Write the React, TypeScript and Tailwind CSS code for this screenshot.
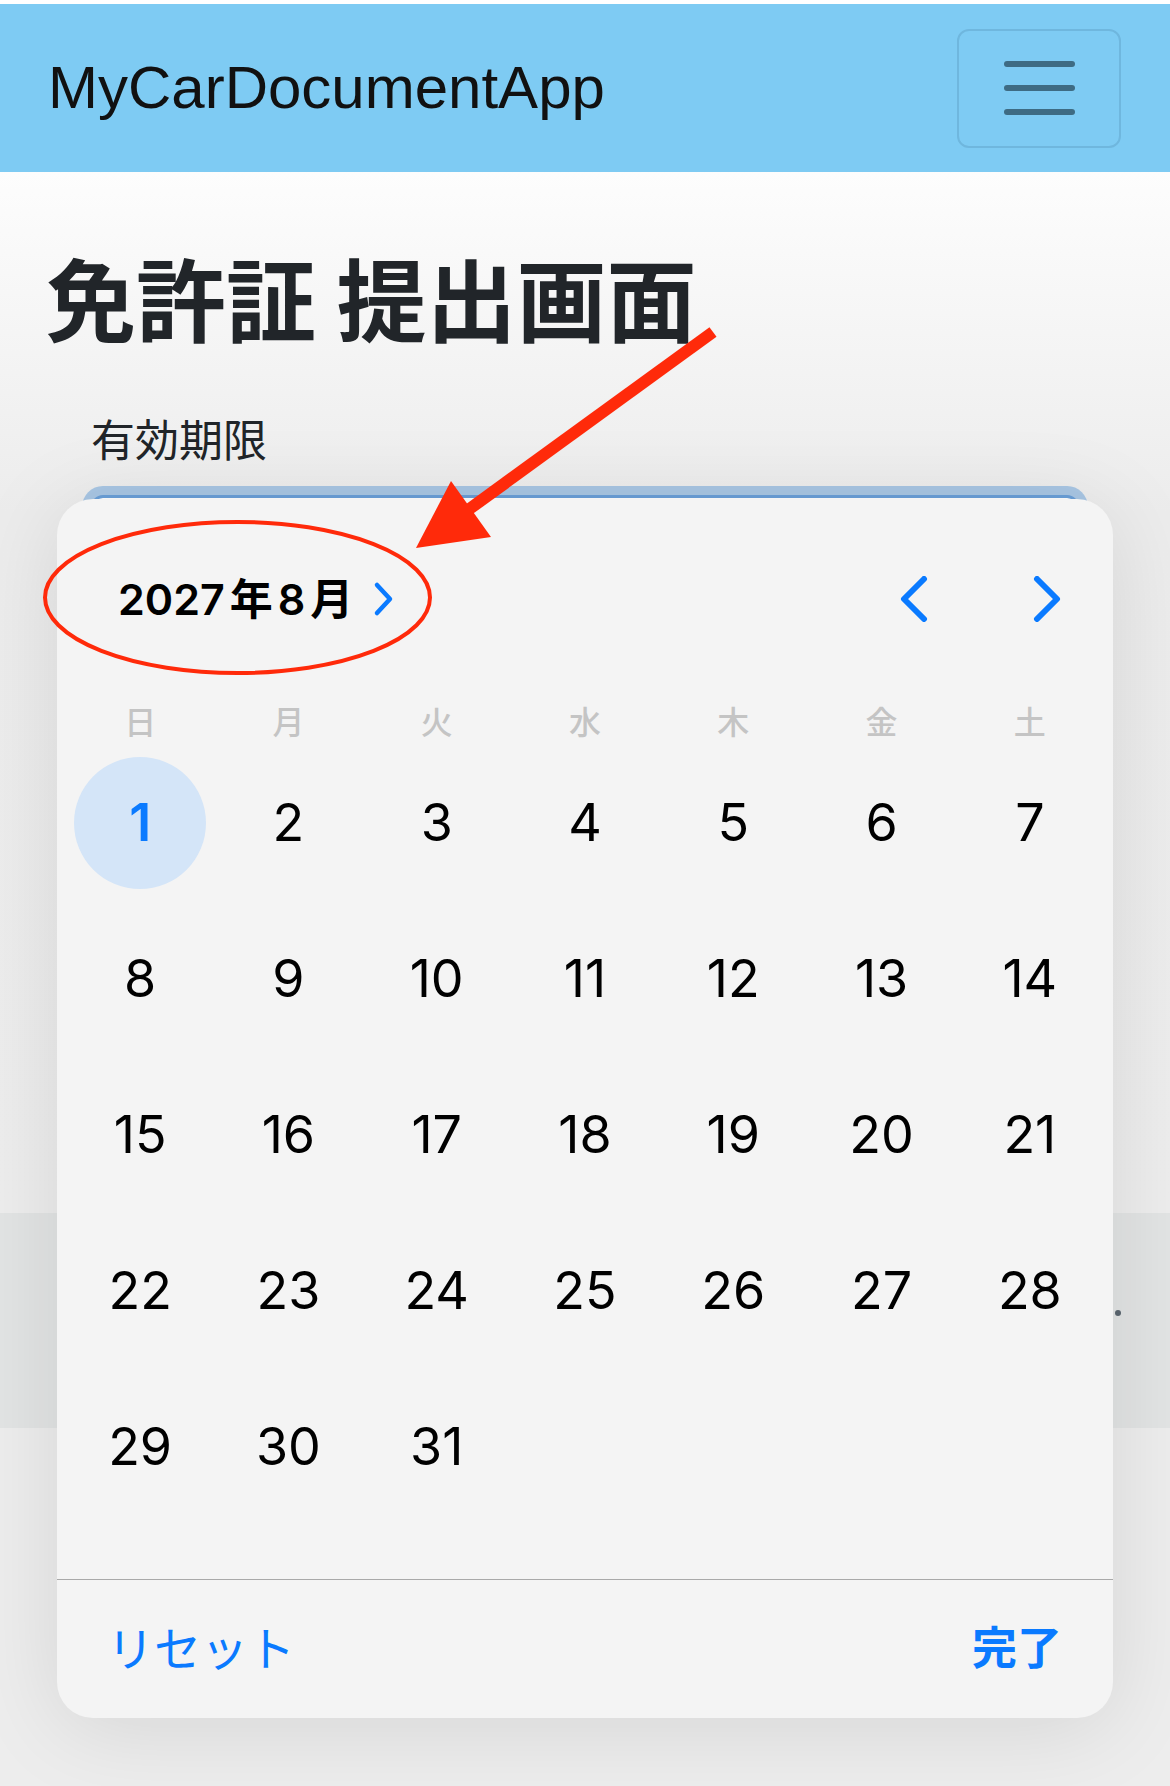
import React from "react";

const weekdays = ["日", "月", "火", "水", "木", "金", "土"];

const weeks: (number | null)[][] = [
  [1, 2, 3, 4, 5, 6, 7],
  [8, 9, 10, 11, 12, 13, 14],
  [15, 16, 17, 18, 19, 20, 21],
  [22, 23, 24, 25, 26, 27, 28],
  [29, 30, 31, null, null, null, null],
];

const Chevron = ({ dir, className }: { dir: "left" | "right"; className?: string }) => (
  <svg width="28" height="46" viewBox="0 0 28 46" className={className}>
    <polyline
      points={dir === "left" ? "24,3 4,23 24,43" : "4,3 24,23 4,43"}
      fill="none"
      stroke="#0a7aff"
      strokeWidth="6"
      strokeLinecap="round"
      strokeLinejoin="round"
    />
  </svg>
);

const DatePopover = () => {
  return (
    <div className="absolute left-[-34px] top-[4px] z-10 flex h-[1219px] w-[1056px] flex-col rounded-[36px] bg-[#f4f4f4] shadow-[0_10px_90px_rgba(0,0,0,0.10)]">
      {/* month header */}
      <div className="mt-[70px] flex h-[60px] items-center justify-between pl-[61px] pr-[52px]">
        <div className="flex items-center">
          <span className="font-['Inter','Noto_Sans_CJK_JP',sans-serif] text-[43px] font-semibold leading-none text-black">
            <span>2027</span>
            <span className="mx-[5px]">年</span>
            <span>8</span>
            <span className="ml-[5px]">月</span>
          </span>
          <svg width="22" height="36" viewBox="0 0 22 36" className="ml-[20px]">
            <polyline
              points="4,4 17,18 4,32"
              fill="none"
              stroke="#0a7aff"
              strokeWidth="4.5"
              strokeLinecap="round"
              strokeLinejoin="round"
            />
          </svg>
        </div>
        <div className="flex items-center gap-[105px]">
          <Chevron dir="left" />
          <Chevron dir="right" />
        </div>
      </div>

      {/* weekdays */}
      <div className="mt-[71px] grid h-[40px] grid-cols-7 px-[9px]">
        {weekdays.map((w) => (
          <div
            key={w}
            className="flex items-center justify-center font-['Noto_Sans_CJK_JP',sans-serif] text-[32px] font-medium leading-none text-[#c4c4c4]"
          >
            {w}
          </div>
        ))}
      </div>

      {/* days */}
      <div className="mt-[5px] flex flex-col px-[9px]">
        {weeks.map((week, i) => (
          <div key={i} className="grid h-[156px] grid-cols-7">
            {week.map((d, j) => (
              <div key={j} className="flex items-center justify-center">
                {d === 1 ? (
                  <div className="flex h-[132px] w-[132px] items-center justify-center rounded-full bg-[#d4e5f8] font-['Inter',sans-serif] text-[52px] font-semibold leading-none text-[#0a7aff]">
                    1
                  </div>
                ) : d ? (
                  <span className="font-['Inter',sans-serif] text-[52px] leading-none text-black">{d}</span>
                ) : null}
              </div>
            ))}
          </div>
        ))}
      </div>

      {/* footer */}
      <div className="mt-auto flex h-[139px] items-center justify-between border-t border-[#a9a9a9] pb-[8px] pl-[50px] pr-[51px] font-['Noto_Sans_CJK_JP',sans-serif] leading-none text-[#0a7aff]">
        <button className="text-[47px] leading-none">リセット</button>
        <button className="text-[45px] font-bold leading-none">完了</button>
      </div>
    </div>
  );
};

const App = () => {
  return (
    <div className="relative flex h-[1786px] w-[1170px] flex-col overflow-hidden bg-[#ededed]">
      <div className="h-[4px] bg-white" />
      <nav className="flex h-[168px] items-center justify-between bg-[#7ecbf3] pl-[48px] pr-[49px]">
        <span className="font-['Liberation_Sans',sans-serif] text-[60px] leading-none text-[#111]">
          MyCarDocumentApp
        </span>
        <button className="flex h-[119px] w-[164px] flex-col items-center justify-center gap-[18px] rounded-[12px] border-[2px] border-[#6fb7de]">
          <span className="h-[6px] w-[71px] rounded-full bg-[#3e6b83]" />
          <span className="h-[6px] w-[71px] rounded-full bg-[#3e6b83]" />
          <span className="h-[6px] w-[71px] rounded-full bg-[#3e6b83]" />
        </button>
      </nav>

      <main className="h-[1041px] bg-[linear-gradient(to_bottom,#fdfdfd_0px,#ececec_340px,#ededed_100%)] px-[51px] pt-[79px]">
        <h1 className="ml-[-5px] h-[89px] font-['Noto_Sans_CJK_JP',sans-serif] text-[90px] font-bold leading-none text-[#212529]">
          免許証 提出画面
        </h1>
        <label className="ml-[40px] mt-[76px] block font-['Noto_Sans_CJK_JP',sans-serif] text-[44px] leading-none text-[#212529]">
          有効期限
        </label>
        <div className="relative mx-[40px] mt-[35px]">
          <div className="h-[100px] rounded-[12px] border-[3px] border-[#6a9fd8] bg-white shadow-[0_0_0_9px_#a8c6e4]" />
          <DatePopover />
        </div>
      </main>

      <div className="flex h-[215px] items-center justify-end bg-[#e2e4e4] pb-[16px] pr-[49px]">
        <span className="h-[6px] w-[6px] rounded-full bg-[#5b6670]" />
      </div>

      {/* red annotation */}
      <svg className="pointer-events-none absolute left-0 top-0 z-20" width="1170" height="1786">
        <ellipse cx="237.5" cy="597.5" rx="192.5" ry="75.5" fill="none" stroke="#ff2a0a" strokeWidth="4" />
        <line x1="713" y1="332" x2="468" y2="510" stroke="#ff2a0a" strokeWidth="12" />
        <polygon points="416,548 451,481 491,537" fill="#ff2a0a" />
      </svg>
    </div>
  );
};

export default App;
